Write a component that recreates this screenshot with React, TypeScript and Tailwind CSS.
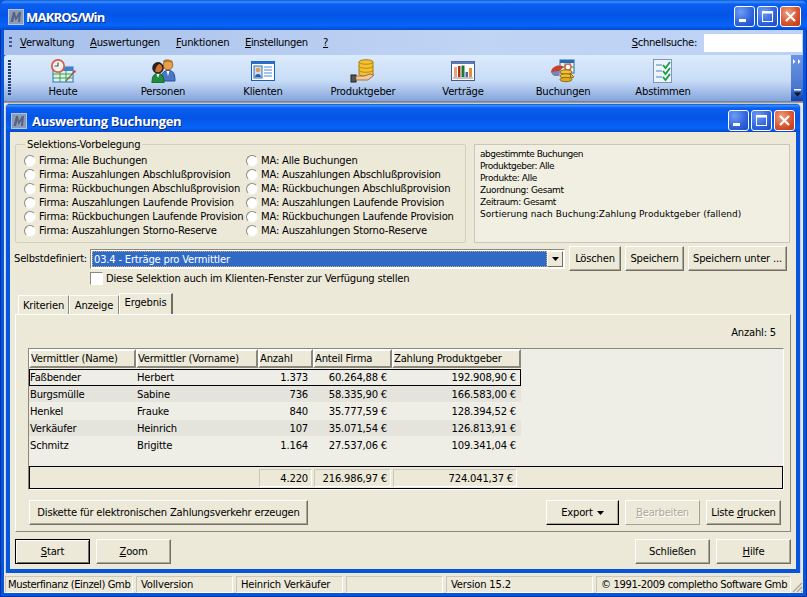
import { Fragment } from 'react';
import type { ReactNode } from 'react';

const tahoma = '[font-family:"DejaVu_Sans",sans-serif]';

const menuItems = [
  { first: 'V', rest: 'erwaltung', cls: 'w-[70px]' },
  { first: 'A', rest: 'uswertungen', cls: 'w-[86px]' },
  { first: 'F', rest: 'unktionen', cls: 'w-[69px]' },
  { first: 'E', rest: 'instellungen', cls: 'w-[78px] tracking-[-0.4px]' },
  { first: '?', rest: '', cls: 'w-[10px]' },
];

const radiosLeft = [
  'Firma: Alle Buchungen',
  'Firma: Auszahlungen Abschlußprovision',
  'Firma: Rückbuchungen Abschlußprovision',
  'Firma: Auszahlungen Laufende Provision',
  'Firma: Rückbuchungen Laufende Provision',
  'Firma: Auszahlungen Storno-Reserve',
];

const radiosRight = [
  'MA: Alle Buchungen',
  'MA: Auszahlungen Abschlußprovision',
  'MA: Rückbuchungen Abschlußprovision',
  'MA: Auszahlungen Laufende Provision',
  'MA: Rückbuchungen Laufende Provision',
  'MA: Auszahlungen Storno-Reserve',
];

const infoLines = [
  { text: 'abgestimmte Buchungen', cls: 'tracking-[-0.5px]' },
  { text: 'Produktgeber: Alle', cls: 'tracking-[-0.5px]' },
  { text: 'Produkte: Alle', cls: 'tracking-[-0.4px]' },
  { text: 'Zuordnung: Gesamt', cls: 'tracking-[-0.4px]' },
  { text: 'Zeitraum: Gesamt', cls: 'tracking-[-0.4px]' },
  { text: 'Sortierung nach Buchung:Zahlung Produktgeber (fallend)', cls: 'tracking-[0.05px]' },
];

const rows = [
  ['Faßbender', 'Herbert', '1.373', '60.264,88 €', '192.908,90 €'],
  ['Burgsmülle', 'Sabine', '736', '58.335,90 €', '166.583,00 €'],
  ['Henkel', 'Frauke', '840', '35.777,59 €', '128.394,52 €'],
  ['Verkäufer', 'Heinrich', '107', '35.071,54 €', '126.813,91 €'],
  ['Schmitz', 'Brigitte', '1.164', '27.537,06 €', '109.341,04 €'],
];

function AppIcon() {
  return (
    <svg width="16" height="16" viewBox="0 0 16 16" className="shrink-0">
      <rect width="16" height="16" fill="#b4c6e2" />
      <rect x="1" y="1" width="14" height="14" fill="#8c9cb8" />
      <path d="M2.5 13 L5 3 H7 L8 8 L11 3 H13 L12 13 H10 L10.5 7.5 L7.5 12 L6.5 7.5 L5 13 Z" fill="#55637e" />
    </svg>
  );
}

function WinBtn({ kind }: { kind: 'min' | 'max' | 'close' }) {
  const bg =
    kind === 'close'
      ? 'bg-[radial-gradient(circle_at_35%_30%,#f0a080,#d8502c_60%,#b8381c)]'
      : 'bg-[radial-gradient(circle_at_30%_25%,#6f9cf5,#2f62dc_60%,#1d49c0)]';
  return (
    <div className={`w-[21px] h-[21px] rounded-[3px] border border-white flex items-center justify-center ${bg}`}>
      <svg width="13" height="13" viewBox="0 0 13 13">
        {kind === 'min' && <rect x="1" y="9" width="7" height="3" fill="#fff" />}
        {kind === 'max' && (
          <>
            <rect x="1.5" y="1.5" width="10" height="10" fill="none" stroke="#fff" />
            <rect x="1" y="1" width="11" height="2.5" fill="#fff" />
          </>
        )}
        {kind === 'close' && <path d="M2 2 L11 11 M11 2 L2 11" stroke="#fff" strokeWidth="2.2" />}
      </svg>
    </div>
  );
}

function Uline({ first, rest }: { first: string; rest: string }) {
  return (
    <>
      <span className="underline underline-offset-1">{first}</span>
      {rest}
    </>
  );
}

function Btn({
  cls,
  children,
  variant = 'normal',
}: {
  cls: string;
  children: ReactNode;
  variant?: 'normal' | 'focus' | 'open' | 'disabled';
}) {
  const look = {
    normal: 'border-t-white border-l-white border-r-[#716f64] border-b-[#716f64] shadow-[inset_-1px_-1px_0_#aca899] text-black',
    focus: 'border-black shadow-[inset_1px_1px_0_#fff,inset_-1px_-1px_0_#716f64] text-black',
    open: 'border-t-white border-l-white border-r-black border-b-black shadow-[inset_-1px_-1px_0_#aca899] text-black',
    disabled: 'border-t-white border-l-white border-r-[#a3a194] border-b-[#a3a194] text-[#aca899] [text-shadow:1px_1px_0_#fff]',
  }[variant];
  return (
    <div className={`${cls} h-[25px] shrink-0 border bg-[#ece9d8] flex items-center justify-center ${look}`}>
      {children}
    </div>
  );
}

function Radio() {
  return (
    <span className="w-[12px] h-[12px] -mt-[1px] shrink-0 rounded-full bg-white border border-[#8c8a7f] border-b-[#f4f2e8] border-r-[#f4f2e8]" />
  );
}

function HeuteIcon() {
  return (
    <svg width="26" height="24" viewBox="0 0 26 24">
      <rect x="3" y="8" width="20" height="15" fill="#dff2e4" stroke="#2a70c8" />
      <rect x="3" y="8" width="20" height="4" fill="#3f7fd0" />
      <path d="M10 12V23 M16 12V23 M3 15H23 M3 19H23" stroke="#3aa05a" />
      <circle cx="8" cy="7" r="6.2" fill="#f2f2f2" stroke="#d8604a" strokeWidth="1.8" />
      <path d="M8 3.5V7H4.5" stroke="#555" strokeWidth="1.2" fill="none" />
      <path d="M25 13 L17 22 L15 23 L16 21 L24 12 Z" fill="#8a6a50" />
      <circle cx="24.5" cy="12.5" r="1.2" fill="#d84030" />
    </svg>
  );
}

function PersonenIcon() {
  return (
    <svg width="26" height="24" viewBox="0 0 26 24">
      <circle cx="18" cy="6" r="4.8" fill="#e8a050" stroke="#a06820" />
      <path d="M13 2 C15 0 21 0 23 3 L22 4 C19 2 16 3 14 4 Z" fill="#b07820" />
      <path d="M11 22 C11 14 14 11.5 18 11.5 C23 11.5 25 14 25 22 Z" fill="#4a78c8" stroke="#2a4f98" />
      <path d="M16.5 12 L18 17 L19.5 12 Z" fill="#fff" />
      <circle cx="8" cy="9" r="5" fill="#d8702c" stroke="#222" strokeWidth="1.6" />
      <path d="M3 8 C3 3 10 2 12 5 C8 4 6 7 5 13 Z" fill="#222" />
      <path d="M2 24 C2 17 4 14.5 8 14.5 C12 14.5 14 17 14 24 Z" fill="#1f8c3c" stroke="#14602a" />
      <path d="M6.5 15 L8 19 L9.5 15 Z" fill="#fff" />
    </svg>
  );
}

function KlientenIcon() {
  return (
    <svg width="24" height="20" viewBox="0 0 24 20">
      <rect x="0.5" y="0.5" width="23" height="19" fill="#fff" stroke="#1f5fb0" />
      <rect x="0.5" y="0.5" width="23" height="2.5" fill="#2a70c8" />
      <rect x="3" y="5" width="8" height="12" fill="#cfe0f5" stroke="#2a70c8" />
      <circle cx="7" cy="9" r="2.3" fill="#e09a4a" />
      <path d="M4 16 C4 12 10 12 10 16 Z" fill="#2a55a8" />
      <path d="M13 6H21 M13 9H21 M13 12H21 M13 15H21" stroke="#4a8ad8" />
    </svg>
  );
}

function ProduktIcon() {
  return (
    <svg width="26" height="24" viewBox="0 0 26 24">
      <path d="M9 3 C9 0 23 0 23 3 V15 C23 18 9 18 9 15 Z" fill="#f2c230" stroke="#a87c10" />
      <path d="M9 7 C9 10 23 10 23 7 M9 11 C9 14 23 14 23 11 M9 3 C9 6 23 6 23 3" fill="none" stroke="#b88a18" />
      <rect x="1" y="16" width="5" height="7" fill="#555" stroke="#222" />
      <path d="M6 17 H14 L20 15 L24 16 L18 21 H6 Z" fill="#f0c8a0" stroke="#a87040" />
    </svg>
  );
}

function VertraegeIcon() {
  return (
    <svg width="24" height="20" viewBox="0 0 24 20">
      <rect x="0.5" y="0.5" width="23" height="19" fill="#fff" stroke="#4a5a80" />
      <rect x="0.5" y="0.5" width="23" height="2.5" fill="#5a7ab8" />
      <rect x="3" y="6" width="3" height="10" fill="#f0a080" />
      <rect x="7" y="5" width="2.5" height="11" fill="#b03020" />
      <rect x="10.5" y="4.5" width="3" height="11.5" fill="#1a7a30" />
      <rect x="14.5" y="11" width="2.5" height="5" fill="#5060b8" />
      <rect x="18" y="7" width="3" height="9" fill="#e09030" />
      <path d="M2 17H22" stroke="#888" />
    </svg>
  );
}

function BuchungenIcon() {
  return (
    <svg width="26" height="24" viewBox="0 0 26 24">
      <rect x="10" y="1" width="14" height="13" fill="#e8f4ea" stroke="#2a6ab0" />
      <rect x="10" y="1" width="14" height="3" fill="#2a6ab0" />
      <path d="M15 4V14 M20 4V14 M10 8H24" stroke="#3aa05a" />
      <path d="M1 13 C2 7 9 5 14 8 L8 13 L10 16 H3 Z" fill="#c84030" />
      <path d="M1 13 L9 12 L9 17 H4 Z" fill="#7088b8" />
      <circle cx="18" cy="8" r="3" fill="#fff" stroke="#d8604a" strokeWidth="1.4" />
      <ellipse cx="16" cy="13" rx="6" ry="2.2" fill="#f2c230" stroke="#906810" />
      <ellipse cx="16" cy="17" rx="6" ry="2.2" fill="#f2c230" stroke="#906810" />
      <ellipse cx="16" cy="20.5" rx="6" ry="2.2" fill="#e0a820" stroke="#906810" />
      <path d="M20 14 L24 18 L21 19 Z" fill="#f2c230" stroke="#906810" />
    </svg>
  );
}

function AbstimmenIcon() {
  return (
    <svg width="20" height="24" viewBox="0 0 20 24">
      <rect x="0.5" y="0.5" width="18" height="23" fill="#eef2fa" stroke="#7f95bd" />
      <path d="M3 6H9 M3 12H9 M3 18H9" stroke="#3a90b8" />
      <path d="M10 6 L12.5 9 L17 3 M10 12 L12.5 15 L17 9 M10 18 L12.5 21 L17 15" fill="none" stroke="#18a040" strokeWidth="1.8" />
    </svg>
  );
}

const tools = [
  { label: 'Heute', icon: <HeuteIcon /> },
  { label: 'Personen', icon: <PersonenIcon /> },
  { label: 'Klienten', icon: <KlientenIcon /> },
  { label: 'Produktgeber', icon: <ProduktIcon /> },
  { label: 'Verträge', icon: <VertraegeIcon /> },
  { label: 'Buchungen', icon: <BuchungenIcon /> },
  { label: 'Abstimmen', icon: <AbstimmenIcon /> },
];

const titleBg =
  'bg-[linear-gradient(180deg,#0a58d8_0%,#3c8efc_6%,#0a5ef0_14%,#0455e6_50%,#0664f8_85%,#0348d0_100%)]';

const titleFont = '[font-family:"Open_Sans",sans-serif] font-bold text-white text-[13px] [text-shadow:1px_1px_0_#0a2a80]';

const headCell =
  'h-[19px] pt-[1px] border-[2px] border-t-white border-l-white border-r-[#8a887c] border-b-[#8a887c] bg-[#ece9d8] flex items-center overflow-hidden whitespace-nowrap';

const sunken = 'border border-[#c9c7ba] border-r-white border-b-white';

export default function App() {
  return (
    <div className={`${tahoma} w-[807px] h-[597px] overflow-hidden flex flex-col bg-[#0855dd] text-[10px] leading-[14px] tracking-[-0.2px] text-black`}>
      {/* Main title bar */}
      <div className={`${titleBg} h-[30px] shrink-0 flex items-center pl-[8px] pr-[6px] pt-[3px] rounded-t-[7px]`}>
        <AppIcon />
        <span className={`${titleFont} ml-[2px] tracking-[-0.8px]`}>MAKROS/Win</span>
        <div className="ml-auto flex gap-[2px]">
          <WinBtn kind="min" />
          <WinBtn kind="max" />
          <WinBtn kind="close" />
        </div>
      </div>

      <div className="flex-1 min-h-0 flex flex-col px-[3px] border-x border-b border-[#0331a8]">
        {/* Menu */}
        <div className="h-[25px] shrink-0 bg-[linear-gradient(90deg,#a8c0ea,#c0d4f4_60%,#bcd2f6)] flex items-center">
          <div className="w-[3px] h-[11px] ml-[5px] mr-[8px] shrink-0 bg-[repeating-linear-gradient(180deg,#3a5a9a_0,#3a5a9a_2px,transparent_2px,transparent_4px)]" />
          {menuItems.map((m) => (
            <span key={m.first} className={`${m.cls} shrink-0`}>
              <Uline first={m.first} rest={m.rest} />
            </span>
          ))}
          <span className="ml-auto mr-[7px] tracking-[-0.3px]">
            <Uline first="S" rest="chnellsuche:" />
          </span>
          <div className="w-[98px] h-[18px] bg-white mr-[1px]" />
        </div>

        {/* Toolbar */}
        <div className="h-[47px] shrink-0 flex bg-[linear-gradient(180deg,#dcebfc_0%,#c8dcf6_55%,#84a4dc_100%)] border-b border-[#6f7fa0] rounded-tl-[3px]">
          <div className="w-[3px] h-[36px] ml-[4px] mt-[5px] mr-[2px] shrink-0 bg-[repeating-linear-gradient(180deg,#27407a_0,#27407a_2px,transparent_2px,transparent_3px)]" />
          {tools.map((t) => (
            <div key={t.label} className="w-[100px] shrink-0 flex flex-col items-center">
              <div className="h-[28px] pt-[3px] flex items-center justify-center">{t.icon}</div>
              <span className="mt-[2px]">{t.label}</span>
            </div>
          ))}
          <div className="ml-auto w-[12px] shrink-0 bg-[linear-gradient(180deg,#6a94e4,#4a78d0_70%,#0f3fa8)] flex flex-col justify-between items-center py-[4px]">
            <svg width="8" height="5" viewBox="0 0 8 5">
              <path d="M0 0L2.5 2.5L0 5Z M5 0L7.5 2.5L5 5Z" fill="#fff" />
            </svg>
            <svg width="7" height="8" viewBox="0 0 7 8">
              <rect x="0" y="0" width="7" height="1.5" fill="#fff" />
              <path d="M0 3.5H7L3.5 7.5Z" fill="#111" />
            </svg>
          </div>
        </div>

        {/* MDI area */}
        <div className="h-[472px] shrink-0 bg-[#ece9d8] border-t border-[#a89c78] pl-[1px] pr-[2px]">
          {/* Child window */}
          <div className="h-[470px] flex flex-col bg-[#0855dd] rounded-t-[5px] border-t border-x border-white/70">
            <div className={`${titleBg} h-[28px] shrink-0 flex items-center px-[5px] pt-[5px] rounded-t-[5px]`}>
              <AppIcon />
              <span className={`${titleFont} ml-[5px] tracking-[-0.3px]`}>Auswertung Buchungen</span>
              <div className="ml-auto flex gap-[2px]">
                <WinBtn kind="min" />
                <WinBtn kind="max" />
                <WinBtn kind="close" />
              </div>
            </div>

            <div className="flex-1 min-h-0 mx-[4px] mb-[4px] bg-[#ece9d8] px-[5px] flex flex-col">
              {/* Presets + summary */}
              <div className="flex mt-[6px] h-[105px] shrink-0">
                <fieldset className="w-[451px] h-[105px] border border-[#d0d0bf] rounded-[2px] pl-[8px]">
                  <legend className="ml-[1px] px-[2px] h-[13px] leading-[13px]">Selektions-Vorbelegung</legend>
                  <div className="grid grid-cols-[222px_1fr] auto-rows-[14px] mt-[3px] whitespace-nowrap">
                    {radiosLeft.map((label, i) => (
                      <Fragment key={label}>
                        <div className="flex items-center gap-[3px] overflow-hidden">
                          <Radio />
                          <span>{label}</span>
                        </div>
                        <div className="flex items-center gap-[3px]">
                          <Radio />
                          <span>{radiosRight[i]}</span>
                        </div>
                      </Fragment>
                    ))}
                  </div>
                </fieldset>
                <div className="ml-[8px] mt-[6px] w-[316px] h-[99px] bg-[#f1efe2] border border-[#c9c7ba] pl-[5px] pt-[3px] text-[9px] leading-[12px]">
                  {infoLines.map((l) => (
                    <div key={l.text} className={`whitespace-nowrap ${l.cls}`}>{l.text}</div>
                  ))}
                </div>
              </div>

              {/* Selbstdefiniert */}
              <div className="flex items-center h-[25px] mt-[3px] shrink-0">
                <span className="w-[75px] shrink-0 -ml-[1px] mr-[1px]">Selbstdefiniert:</span>
                <div className="w-[475px] h-[20px] shrink-0 border border-[#8a887c] border-r-white border-b-white bg-white p-[1px] flex">
                  <div className="flex-1 bg-[#316ac5] text-white pl-[1px] leading-[15px] border border-dotted border-[#c8b070]">
                    03.4 - Erträge pro Vermittler
                  </div>
                  <div className="w-[16px] bg-[#ece9d8] border border-t-white border-l-white border-r-[#716f64] border-b-[#716f64] flex items-center justify-center">
                    <svg width="7" height="4" viewBox="0 0 7 4">
                      <path d="M0 0H7L3.5 4Z" fill="#000" />
                    </svg>
                  </div>
                </div>
                <div className="ml-[4px] flex gap-[4px]">
                  <Btn cls="w-[52px]">Löschen</Btn>
                  <Btn cls="w-[59px]">Speichern</Btn>
                  <Btn cls="w-[99px]">Speichern unter ...</Btn>
                </div>
              </div>

              {/* Checkbox */}
              <div className="flex items-center h-[15px] pl-[75px] shrink-0">
                <span className="w-[13px] h-[13px] bg-white border border-[#8a887c] border-r-white border-b-white" />
                <span className="ml-[3px]">Diese Selektion auch im Klienten-Fenster zur Verfügung stellen</span>
              </div>

              {/* Tabs */}
              <div className="flex items-end h-[21px] mt-[7px] pl-[3px] shrink-0">
                <div className="w-[51px] h-[19px] pt-[1px] border border-b-0 border-t-white border-l-white border-r-[#8a887c] flex items-center justify-center">Kriterien</div>
                <div className="w-[50px] h-[19px] pt-[1px] border border-b-0 border-t-white border-l-white border-r-[#8a887c] flex items-center justify-center">Anzeige</div>
                <div className="w-[54px] h-[21px] pb-[3px] border-t border-l border-r-[2px] border-t-white border-l-white border-r-[#716f64] flex items-center justify-center">Ergebnis</div>
              </div>

              {/* Tab panel */}
              <div className="w-[776px] h-[218px] shrink-0 border border-t-white border-l-white border-r-[#8a887c] border-b-[#8a887c] pl-[12px] pr-[5px] flex flex-col">
                <div className="h-[33px] shrink-0 flex items-center justify-end pr-[9px] pt-[3px]">Anzahl: 5</div>

                <div className="w-[756px] h-[142px] shrink-0 bg-[#eeede6] border border-[#8a887c] border-r-white border-b-white flex flex-col">
                  <div className="grid grid-cols-[107px_122px_55px_79px_129px] w-[492px]">
                    <div className={headCell}>Vermittler (Name)</div>
                    <div className={headCell}>Vermittler (Vorname)</div>
                    <div className={headCell}>Anzahl</div>
                    <div className={headCell}>Anteil Firma</div>
                    <div className={headCell}>Zahlung Produktgeber</div>
                  </div>
                  <div className="w-[492px] mt-[1px] flex flex-col">
                    {rows.map((r, i) => (
                      <div
                        key={r[0]}
                        className={`grid grid-cols-[107px_122px_55px_79px_129px] h-[17px] pt-[1px] items-center border-b border-[#f0efe4] ${
                          i % 2 === 1 ? 'bg-[#e4e3dc]' : 'bg-[#eeede6]'
                        } ${i === 0 ? 'outline outline-1 -outline-offset-1 outline-black' : ''}`}
                      >
                        <span className="pl-[1px] whitespace-nowrap">{r[0]}</span>
                        <span className="pl-[1px] whitespace-nowrap">{r[1]}</span>
                        <span className="text-right pr-[5px]">{r[2]}</span>
                        <span className="text-right pr-[5px]">{r[3]}</span>
                        <span className="text-right pr-[5px]">{r[4]}</span>
                      </div>
                    ))}
                  </div>
                  <div className="mt-auto h-[23px] shrink-0 bg-[#ece9d8] border border-black flex items-start gap-[2px] pt-[2px] pl-[229px]">
                    <div className={`${sunken} w-[53px] h-[18px] text-right pr-[3px] pt-[1px] leading-[15px]`}>4.220</div>
                    <div className={`${sunken} w-[77px] h-[18px] text-right pr-[3px] pt-[1px] leading-[15px]`}>216.986,97 €</div>
                    <div className={`${sunken} w-[124px] h-[18px] text-right pr-[3px] pt-[1px] leading-[15px]`}>724.041,37 €</div>
                  </div>
                </div>

                <div className="flex mt-[10px] pl-[1px] pr-[4px] shrink-0">
                  <Btn cls="w-[279px]">Diskette für elektronischen Zahlungsverkehr erzeugen</Btn>
                  <div className="ml-auto flex gap-[6px]">
                    <Btn cls="w-[73px]" variant="open">
                      Export
                      <svg width="7" height="4" viewBox="0 0 7 4" className="ml-[4px]">
                        <path d="M0 0H7L3.5 4Z" fill="#000" />
                      </svg>
                    </Btn>
                    <Btn cls="w-[75px]" variant="disabled">
                      <span>
                        <Uline first="B" rest="earbeiten" />
                      </span>
                    </Btn>
                    <Btn cls="w-[75px]">
                      <span>
                        Liste <Uline first="d" rest="rucken" />
                      </span>
                    </Btn>
                  </div>
                </div>
              </div>

              {/* Window buttons */}
              <div className="flex mt-[7px] shrink-0">
                <Btn cls="w-[75px]" variant="focus">
                  <span>
                    <Uline first="S" rest="tart" />
                  </span>
                </Btn>
                <Btn cls="w-[75px] ml-[6px]">
                  <span>
                    <Uline first="Z" rest="oom" />
                  </span>
                </Btn>
                <div className="ml-auto flex gap-[6px]">
                  <Btn cls="w-[75px]">Schließen</Btn>
                  <Btn cls="w-[75px]">
                    <span>
                      <Uline first="H" rest="ilfe" />
                    </span>
                  </Btn>
                </div>
              </div>
            </div>
          </div>
        </div>

        {/* Status bar */}
        <div className="flex-1 min-h-0 mb-[3px] bg-[#ece9d8] flex items-end gap-[3px] pl-[1px]">
          <div className={`${sunken} w-[128px] h-[17px] pl-[2px] leading-[15px] tracking-[-0.4px] whitespace-nowrap`}>Musterfinanz (Einzel) Gmb</div>
          <div className={`${sunken} w-[97px] h-[17px] pl-[4px] leading-[15px]`}>Vollversion</div>
          <div className={`${sunken} w-[107px] h-[17px] pl-[4px] leading-[15px]`}>Heinrich Verkäufer</div>
          <div className={`${sunken} w-[97px] h-[17px]`} />
          <div className={`${sunken} w-[147px] h-[17px] pl-[4px] leading-[15px]`}>Version 15.2</div>
          <div className={`${sunken} w-[195px] h-[17px] pl-[4px] leading-[15px] tracking-[-0.35px] whitespace-nowrap`}>© 1991-2009 completho Software Gmb</div>
          <svg width="12" height="12" viewBox="0 0 12 12" className="-ml-[3px] shrink-0">
            <path d="M11 2L2 11 M11 6L6 11 M11 10L10 11" stroke="#aca899" strokeWidth="1.4" />
          </svg>
        </div>
      </div>
    </div>
  );
}
